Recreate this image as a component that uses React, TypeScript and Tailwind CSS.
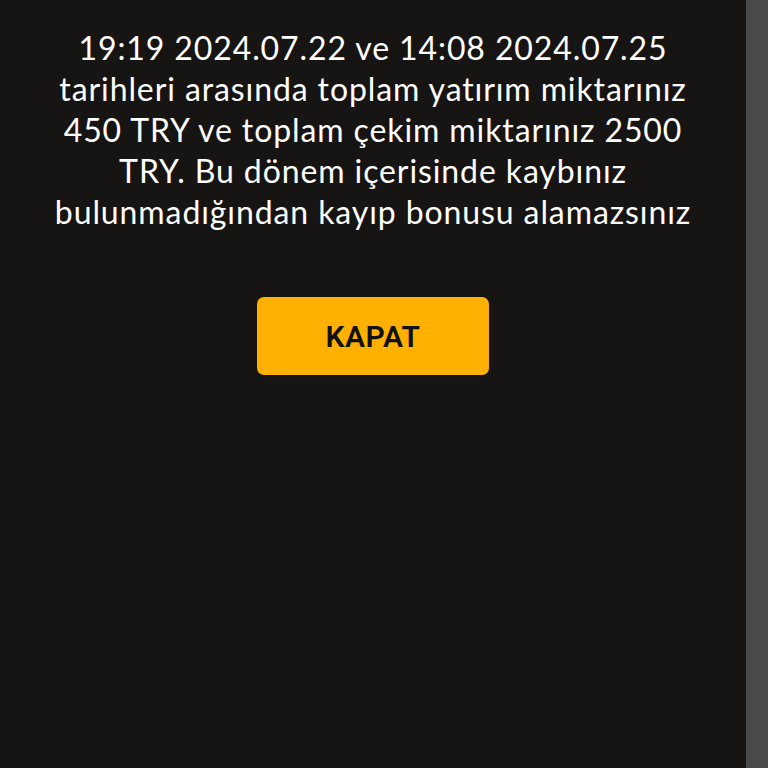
export default function App() {
  return (
    <div className="flex h-[768px] w-full bg-[#171414]">
      <div className="flex flex-1 flex-col items-center px-[40px] pt-[27px]">
        <p className="text-center font-['Lato',sans-serif] text-[32px] leading-[41px] tracking-[0.9px] text-white">
          19:19 2024.07.22 ve 14:08 2024.07.25 tarihleri arasında toplam yatırım miktarınız 450 TRY ve toplam
          çekim miktarınız 2500 TRY. Bu dönem içerisinde kaybınız bulunmadığından kayıp bonusu alamazsınız
        </p>
        <button className="mt-[65px] flex h-[78px] w-[232px] items-center justify-center rounded-[7px] bg-[#ffb000] font-['Roboto',sans-serif] text-[30px] font-semibold tracking-[0.5px] text-[#111]">
          KAPAT
        </button>
      </div>
      <div className="w-[22px] bg-[#4a4a4a]" />
    </div>
  );
}
